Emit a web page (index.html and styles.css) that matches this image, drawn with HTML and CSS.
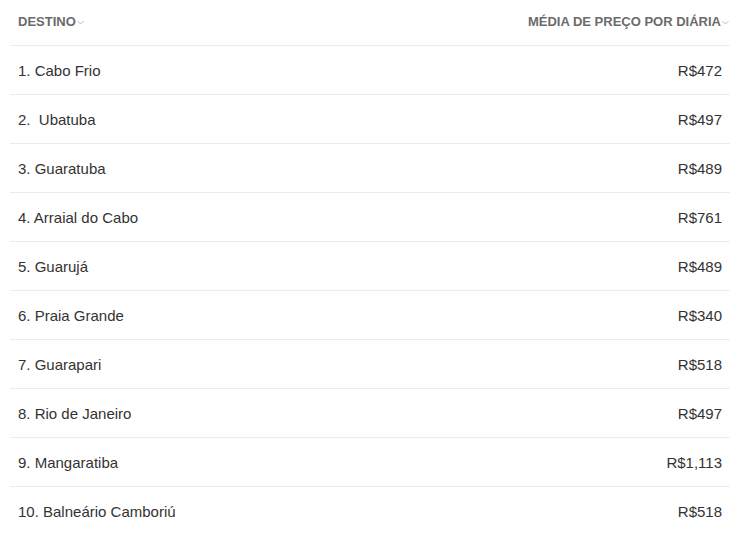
FILE: index.html
```html
<!DOCTYPE html>
<html lang="pt">
<head>
<meta charset="utf-8">
<link rel="stylesheet" href="styles.css">
</head>
<body>
<div class="wrap">
<table class="tbl">
<thead>
<tr>
<th class="th-left">DESTINO<span class="chev"><svg width="7" height="5" viewBox="0 0 7 5"><path d="M0.5 1 L3.5 4 L6.5 1" fill="none" stroke="#bbb" stroke-width="1"/></svg></span></th>
<th class="th-right">MÉDIA DE PREÇO POR DIÁRIA<span class="chev"><svg width="7" height="5" viewBox="0 0 7 5"><path d="M0.5 1 L3.5 4 L6.5 1" fill="none" stroke="#bbb" stroke-width="1"/></svg></span></th>
</tr>
</thead>
<tbody>
<tr><td>1. Cabo Frio</td><td class="num">R$472</td></tr>
<tr><td>2.&nbsp; Ubatuba</td><td class="num">R$497</td></tr>
<tr><td>3. Guaratuba</td><td class="num">R$489</td></tr>
<tr><td>4. Arraial do Cabo</td><td class="num">R$761</td></tr>
<tr><td>5. Guarujá</td><td class="num">R$489</td></tr>
<tr><td>6. Praia Grande</td><td class="num">R$340</td></tr>
<tr><td>7. Guarapari</td><td class="num">R$518</td></tr>
<tr><td>8. Rio de Janeiro</td><td class="num">R$497</td></tr>
<tr><td>9. Mangaratiba</td><td class="num">R$1,113</td></tr>
<tr><td>10. Balneário Camboriú</td><td class="num">R$518</td></tr>
</tbody>
</table>
</div>
</body>
</html>
```
FILE: styles.css
```css
html, body {
  margin: 0;
  padding: 0;
  background: #fff;
}
body {
  font-family: "Liberation Sans", Arial, Helvetica, sans-serif;
  color: #333;
}
.wrap {
  padding: 0 20px 0 10px;
}
.tbl {
  width: 100%;
  border-collapse: collapse;
}
.tbl th {
  font-size: 13px;
  font-weight: bold;
  color: #6b6b6b;
  height: 45px;
  box-sizing: border-box;
  padding: 0 0 2px 8px;
  vertical-align: middle;
  white-space: nowrap;
  border-bottom: 1px solid #ebebeb;
}
.th-left {
  text-align: left;
}
.th-right {
  text-align: right;
}
.chev {
  display: inline-block;
  width: 8px;
  margin-left: 1px;
  vertical-align: 1px;
}
.chev svg {
  display: block;
}
.tbl td {
  font-size: 15px;
  height: 47px;
  padding: 1px 8px 0;
  vertical-align: middle;
  border-top: 1px solid #ebebeb;
}
.tbl tbody tr:first-child td {
  border-top: none;
}
.tbl td.num {
  text-align: right;
}
```
